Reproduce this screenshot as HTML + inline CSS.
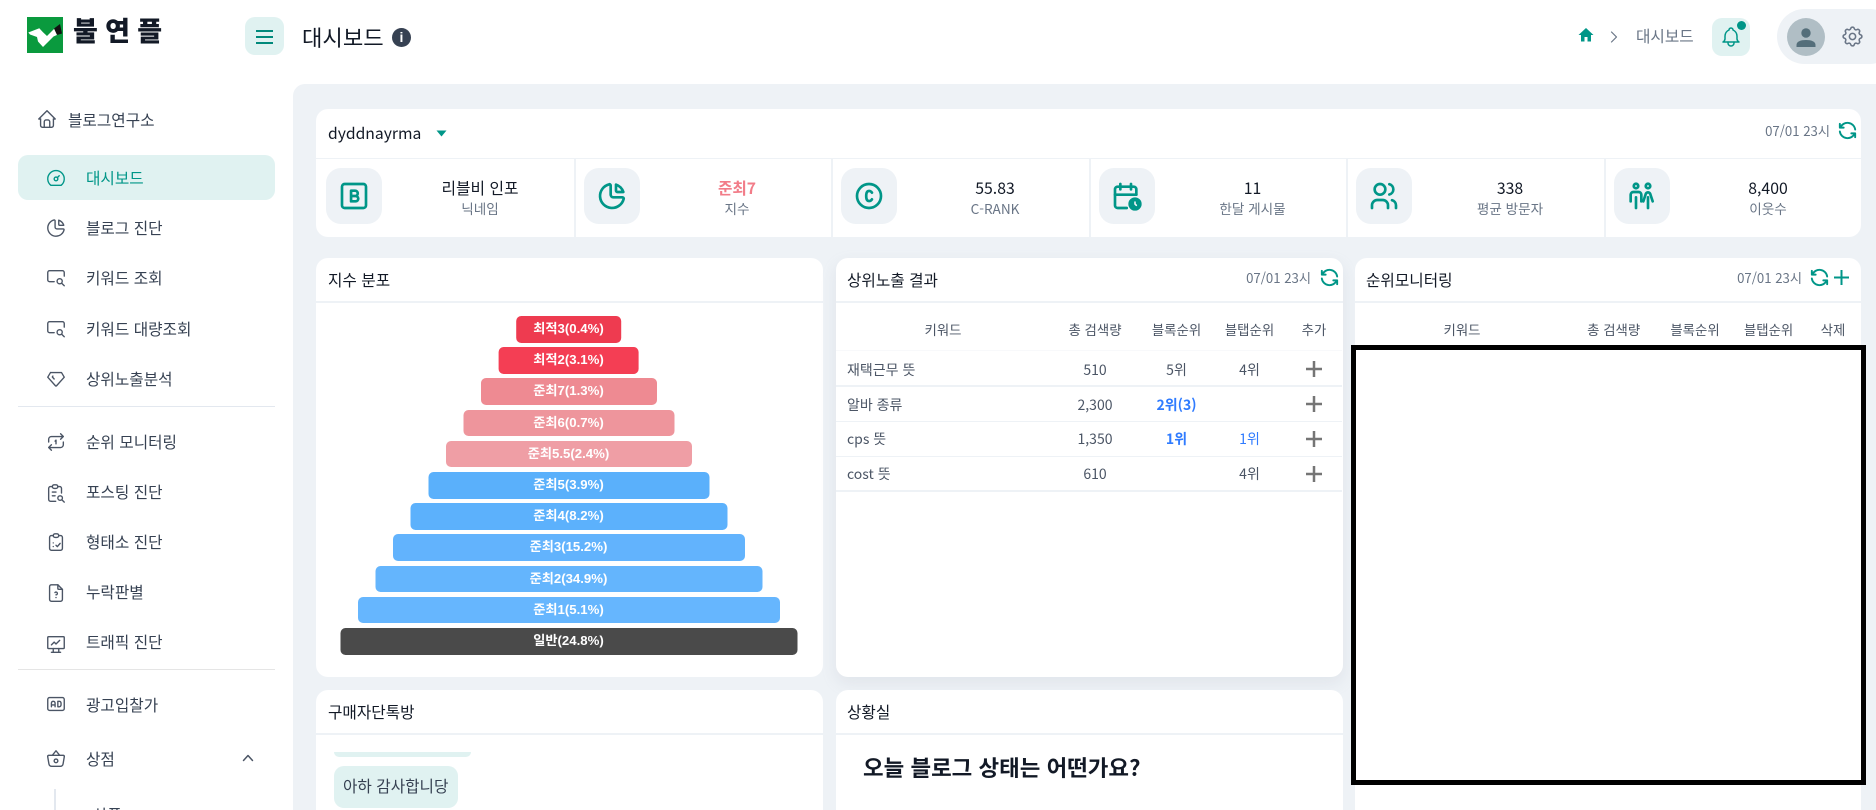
<!DOCTYPE html>
<html lang="ko"><head><meta charset="utf-8"><title>대시보드</title>
<style>
*{box-sizing:border-box}
html,body{margin:0;padding:0;width:1876px;height:810px;overflow:hidden;background:#fff}
body{position:relative;font-family:"Noto Sans CJK KR","Liberation Sans",sans-serif;color:#364152;font-size:15.7px}
.a{position:absolute}
.t{position:absolute;height:30px;line-height:30px;white-space:nowrap}
.c{position:absolute;height:30px;line-height:30px;white-space:nowrap;transform:translateX(-50%)}
svg{position:absolute;overflow:visible}
.i{fill:none;stroke:#4b5565;stroke-width:1.5;stroke-linecap:round;stroke-linejoin:round}
.g{fill:none;stroke:#009688;stroke-width:2;stroke-linecap:round;stroke-linejoin:round}
.card{position:absolute;background:#fff;border-radius:12px}
.line{position:absolute;height:1.5px;background:#eef2f6}
.box{position:absolute;width:56px;height:56px;top:168px;background:#eef2f6;border-radius:15px}
.bar{position:absolute;height:26.6px;border-radius:5px;color:#fff;font:bold 13.2px/26px "Liberation Sans","Noto Sans CJK KR",sans-serif;text-align:center;transform:translateX(-50%);left:568.5px;white-space:nowrap}
.th{color:#4b5565;font-size:13.4px}
.td{color:#4b5565;font-size:14px}
.v{color:#121926;font-size:15.8px}
.s{color:#697586;font-size:13.6px}
.dt{color:#697586;font-size:13.2px}
.h{color:#121926;font-size:15.7px}
.bl{color:#2f7bff}
</style></head><body>

<!-- main bg -->
<div class="a" style="left:293px;top:84px;width:1583px;height:726px;background:#eef2f6;border-top-left-radius:12px"></div>

<!-- logo -->
<svg style="left:27px;top:17px" width="36" height="36" viewBox="0 0 36 36"><rect width="36" height="36" fill="#0a9a3e"/><path d="M1.300 15.500L12.300 11.300L16 15.300L20 19L28 11L31 13L31 17.500L26.500 19.500L20 26L16 30L11 24.500L10 20L3 17.500Z" fill="#fff"/><path d="M27 11.500L33 7L35 16.500L30 18Z" fill="#111"/></svg>
<div class="t" style="left:73px;top:15px;font-size:27px;font-weight:900;color:#121926;letter-spacing:7.300px">불연플</div>

<!-- hamburger -->
<div class="a" style="left:245px;top:17px;width:39px;height:38px;background:#e0f2f1;border-radius:10px"></div>
<div class="a" style="left:256px;top:30px;width:17px;height:1.500px;background:#00897b"></div>
<div class="a" style="left:256px;top:36px;width:17px;height:1.500px;background:#00897b"></div>
<div class="a" style="left:256px;top:42px;width:17px;height:1.500px;background:#00897b"></div>

<!-- title -->
<div class="t" style="left:302px;top:22px;font-size:22.2px;color:#121926">대시보드</div>
<div class="a" style="left:392px;top:28px;width:19px;height:19px;border-radius:50%;background:#364152;color:#fff;font:bold 14px/19px 'Liberation Sans',sans-serif;text-align:center">i</div>

<!-- sidebar -->
<svg class="i" style="left:36px;top:108px" width="22" height="22" viewBox="0 0 24 24"><path d="M5 12H3l9-9 9 9h-2"/><path d="M5 12v7a2 2 0 0 0 2 2h10a2 2 0 0 0 2-2v-7"/><path d="M9 21v-6a2 2 0 0 1 2-2h2a2 2 0 0 1 2 2v6"/></svg>
<div class="t" style="left:68px;top:105px">블로그연구소</div>

<div class="a" style="left:18px;top:155px;width:257px;height:45px;background:#e0f2f1;border-radius:10px"></div>
<svg class="i" style="left:45px;top:167px;stroke:#009688" width="22" height="22" viewBox="0 0 24 24"><path d="M10 13a2 2 0 1 0 4 0a2 2 0 0 0-4 0"/><path d="M13.450 11.550l2.050-2.050"/><path d="M6.400 20a9 9 0 1 1 11.200 0z"/></svg>
<div class="t" style="left:86px;top:163px;color:#009688">대시보드</div>

<svg class="i" style="left:45px;top:217px" width="22" height="22" viewBox="0 0 24 24"><path d="M10 3.200a9 9 0 1 0 10.800 10.800a1 1 0 0 0-1-1h-6.800a2 2 0 0 1-2-2v-7a.9.900 0 0 0-1-.8"/><path d="M15 3.500a9 9 0 0 1 5.500 5.500h-4.500a1 1 0 0 1-1-1v-4.500"/></svg>
<div class="t" style="left:86px;top:213px">블로그 진단</div>

<svg class="i" style="left:45px;top:267px" width="22" height="22" viewBox="0 0 24 24"><path d="M10 16H5a2 2 0 0 1-2-2V6a2 2 0 0 1 2-2h14a2 2 0 0 1 2 2v4"/><circle cx="16" cy="15.500" r="2.800"/><path d="M18.200 17.700L21 20.500"/></svg>
<div class="t" style="left:86px;top:263px">키워드 조회</div>

<svg class="i" style="left:45px;top:318px" width="22" height="22" viewBox="0 0 24 24"><path d="M10 16H5a2 2 0 0 1-2-2V6a2 2 0 0 1 2-2h14a2 2 0 0 1 2 2v4"/><circle cx="16" cy="15.500" r="2.800"/><path d="M18.200 17.700L21 20.500"/></svg>
<div class="t" style="left:86px;top:314px">키워드 대량조회</div>

<svg class="i" style="left:45px;top:368px" width="22" height="22" viewBox="0 0 24 24"><path d="M6 5h12l3 5-8.500 9.500a.7.700 0 0 1-1 0L3 10l3-5"/><path d="M10 12L8 9.800l.6-1"/></svg>
<div class="t" style="left:86px;top:364px">상위노출분석</div>

<div class="a" style="left:18px;top:405.500px;width:257px;height:1.500px;background:#e3e8ef"></div>

<svg class="i" style="left:45px;top:431px" width="22" height="22" viewBox="0 0 24 24"><path d="M4 12V9a3 3 0 0 1 3-3h13m-3-3l3 3-3 3"/><path d="M20 12v3a3 3 0 0 1-3 3H4m3 3l-3-3 3-3"/><path d="M11 11l1-1v4"/></svg>
<div class="t" style="left:86px;top:427px">순위 모니터링</div>

<svg class="i" style="left:45px;top:482px" width="22" height="22" viewBox="0 0 24 24"><path d="M8 5H6a2 2 0 0 0-2 2v12a2 2 0 0 0 2 2h5.700"/><path d="M18 12V7a2 2 0 0 0-2-2h-2"/><rect x="8" y="3" width="6" height="4" rx="2"/><path d="M8 11h4M8 15h3"/><circle cx="16.500" cy="17.500" r="2.500"/><path d="M18.500 19.500L21 22"/></svg>
<div class="t" style="left:86px;top:477px">포스팅 진단</div>

<svg class="i" style="left:45px;top:531px" width="22" height="22" viewBox="0 0 24 24"><path d="M9 5H7a2 2 0 0 0-2 2v12a2 2 0 0 0 2 2h10a2 2 0 0 0 2-2V7a2 2 0 0 0-2-2h-2"/><rect x="9" y="3" width="6" height="4" rx="2"/><path d="M9 13v.01M9 17v.01M12 15.500l1.500 1.500 3-3.500"/></svg>
<div class="t" style="left:86px;top:527px">형태소 진단</div>

<svg class="i" style="left:45px;top:582px" width="22" height="22" viewBox="0 0 24 24"><path d="M14 3v4a1 1 0 0 0 1 1h4"/><path d="M17 21H7a2 2 0 0 1-2-2V5a2 2 0 0 1 2-2h7l5 5v11a2 2 0 0 1-2 2"/><path d="M12 17v.01"/><path d="M12 14a1.500 1.500 0 1 0-1.140-2.470"/></svg>
<div class="t" style="left:86px;top:577px">누락판별</div>

<svg class="i" style="left:45px;top:633px" width="22" height="22" viewBox="0 0 24 24"><rect x="3" y="4" width="18" height="13" rx="1"/><path d="M7 13l3-3 2 2 4-4"/><path d="M9 17v4M15 17v4M7 21h10"/></svg>
<div class="t" style="left:86px;top:627px">트래픽 진단</div>

<div class="a" style="left:18px;top:668.500px;width:257px;height:1.500px;background:#e5e5e5"></div>

<svg class="i" style="left:45px;top:693px" width="22" height="22" viewBox="0 0 24 24"><rect x="3" y="5" width="18" height="14" rx="2"/><path d="M7 15v-4a2 2 0 0 1 4 0v4M7 13h4"/><path d="M14 9v6h1.500a2 2 0 0 0 2-2v-2a2 2 0 0 0-2-2z"/></svg>
<div class="t" style="left:86px;top:690px">광고입찰가</div>

<svg class="i" style="left:45px;top:748px" width="22" height="22" viewBox="0 0 24 24"><circle cx="12" cy="14" r="2"/><path d="M4 8h16a1.500 1.500 0 0 1 1 1.800l-1.300 7.700a3 3 0 0 1-3 2.500H7.300a3 3 0 0 1-3-2.500L3 9.800A1.500 1.500 0 0 1 4 8z"/><path d="M8 8l4-5 4 5"/></svg>
<div class="t" style="left:86px;top:744px">상점</div>
<svg class="i" style="left:242px;top:752px" width="12" height="12" viewBox="0 0 12 12"><path d="M1.500 8.500L6 3.500l4.500 5"/></svg>
<div class="a" style="left:54px;top:789px;width:1.500px;height:21px;background:#e3e8ef"></div>
<div class="t" style="left:93px;top:800px">상품</div>

<!-- top right -->
<svg style="left:1578px;top:27px" width="16" height="16" viewBox="0 0 16 16"><path d="M8 1L0.500 8H3v6.500h3.500V10h3v4.500H13V8h2.500z" fill="#009688"/></svg>
<svg class="i" style="left:1610px;top:30px;stroke:#697586;stroke-width:1.200" width="8" height="14" viewBox="0 0 8 14"><path d="M1.500 2L6.500 7l-5 5"/></svg>
<div class="t" style="left:1636px;top:21px;color:#697586;font-size:15.7px">대시보드</div>
<div class="a" style="left:1712px;top:18px;width:38px;height:38px;background:#e0f2f1;border-radius:10px"></div>
<svg class="g" style="left:1719px;top:25px;stroke-width:1.500" width="24" height="24" viewBox="0 0 24 24"><path d="M10 5a2 2 0 1 1 4 0 7 7 0 0 1 4 6v3a4 4 0 0 0 2 3H4a4 4 0 0 0 2-3v-3a7 7 0 0 1 4-6"/><path d="M9 17v1a3 3 0 0 0 6 0v-1"/></svg>
<div class="a" style="left:1737px;top:21px;width:9px;height:9px;border-radius:50%;background:#009688"></div>
<div class="a" style="left:1777px;top:9px;width:120px;height:55px;background:#eef2f6;border-radius:28px"></div>
<div class="a" style="left:1787px;top:18px;width:38px;height:38px;background:#b0bec5;border-radius:50%"></div>
<svg style="left:1794px;top:25px" width="24" height="24" viewBox="0 0 24 24" fill="#546e7a"><circle cx="12" cy="8" r="4.700"/><path d="M2.500 22v-2c0-3.500 4-5 9.500-5s9.500 1.500 9.500 5v2z"/></svg>
<svg class="i" style="left:1840px;top:24px;stroke:#697586" width="25" height="25" viewBox="0 0 24 24"><path d="M10.325 4.317c.426-1.756 2.924-1.756 3.350 0a1.724 1.724 0 0 0 2.573 1.066c1.543-.94 3.310.826 2.370 2.370a1.724 1.724 0 0 0 1.065 2.572c1.756.426 1.756 2.924 0 3.350a1.724 1.724 0 0 0-1.066 2.573c.94 1.543-.826 3.310-2.370 2.370a1.724 1.724 0 0 0-2.572 1.065c-.426 1.756-2.924 1.756-3.350 0a1.724 1.724 0 0 0-2.573-1.066c-1.543.94-3.310-.826-2.370-2.370a1.724 1.724 0 0 0-1.065-2.572c-1.756-.426-1.756-2.924 0-3.350a1.724 1.724 0 0 0 1.066-2.573c-.94-1.543.826-3.310 2.370-2.370 1 .608 2.296.07 2.572-1.065z"/><circle cx="12" cy="12" r="3"/></svg>

<!-- stat card -->
<div class="card" style="left:316px;top:109px;width:1545px;height:128px"></div>
<div class="t" style="left:328px;top:118px;color:#121926;font-size:15.7px">dyddnayrma</div>
<svg style="left:436px;top:130px" width="11" height="7" viewBox="0 0 11 7"><path d="M0.500 0.500h10L5.500 6.500z" fill="#009688"/></svg>
<div class="t dt" style="right:46px;top:116px">07/01 23시</div>
<svg class="g" style="left:1836px;top:119px" width="23" height="23" viewBox="0 0 24 24"><path d="M20 11a8.100 8.100 0 0 0-15.500-2m-.5-4v4h4"/><path d="M4 13a8.100 8.100 0 0 0 15.500 2m.5 4v-4h-4"/></svg>
<div class="line" style="left:316px;top:157.5px;width:1545px"></div>
<div class="a" style="left:574px;top:159px;width:1.500px;height:78px;background:#eef2f6"></div>
<div class="a" style="left:831px;top:159px;width:1.500px;height:78px;background:#eef2f6"></div>
<div class="a" style="left:1089px;top:159px;width:1.500px;height:78px;background:#eef2f6"></div>
<div class="a" style="left:1346px;top:159px;width:1.500px;height:78px;background:#eef2f6"></div>
<div class="a" style="left:1604px;top:159px;width:1.500px;height:78px;background:#eef2f6"></div>

<div class="box" style="left:326px"></div>
<svg class="g" style="left:338px;top:180px" width="32" height="32" viewBox="0 0 24 24"><rect x="3" y="3" width="18" height="18" rx="2"/><path d="M9.800 8h3a2 2 0 0 1 0 4h-3zM9.800 12h3.400a2 2 0 0 1 0 4H9.800z"/></svg>
<div class="c v" style="left:480px;top:173px">리블비 인포</div>
<div class="c s" style="left:480px;top:193px">닉네임</div>

<div class="box" style="left:584px"></div>
<svg class="g" style="left:596px;top:180px" width="32" height="32" viewBox="0 0 24 24"><path d="M10 3.200a9 9 0 1 0 10.800 10.800a1 1 0 0 0-1-1h-6.800a2 2 0 0 1-2-2v-7a.9.900 0 0 0-1-.8"/><path d="M15 3.500a9 9 0 0 1 5.500 5.500h-4.500a1 1 0 0 1-1-1v-4.500"/></svg>
<div class="c" style="left:737px;top:173px;color:#f27c88;font-weight:700;font-size:15.7px">준최7</div>
<div class="c s" style="left:737px;top:193px">지수</div>

<div class="box" style="left:841px"></div>
<svg class="g" style="left:853px;top:180px" width="32" height="32" viewBox="0 0 24 24"><circle cx="12" cy="12" r="9"/><path d="M14.200 9.500c-.6-.9-1.300-1.300-2.100-1.300-1.300 0-2.200 1.200-2.200 3.800s.9 3.800 2.200 3.800c.8 0 1.500-.4 2.100-1.300"/></svg>
<div class="c v" style="left:995px;top:173px">55.83</div>
<div class="c s" style="left:995px;top:193px">C-RANK</div>

<div class="box" style="left:1099px"></div>
<svg class="g" style="left:1111px;top:180px" width="32" height="32" viewBox="0 0 24 24"><path d="M11.800 21H5a2 2 0 0 1-2-2V7a2 2 0 0 1 2-2h12a2 2 0 0 1 2 2v4"/><path d="M15 3v4M7 3v4M3 11h16"/><circle cx="18" cy="18" r="4" fill="#009688"/><path d="M18 16.500V18l1 1" stroke="#eef2f6" stroke-width="1.200"/></svg>
<div class="c v" style="left:1252.5px;top:173px">11</div>
<div class="c s" style="left:1252.5px;top:193px">한달 게시물</div>

<div class="box" style="left:1356px"></div>
<svg class="g" style="left:1368px;top:180px" width="32" height="32" viewBox="0 0 24 24"><circle cx="9" cy="7" r="4"/><path d="M3 21v-2a4 4 0 0 1 4-4h4a4 4 0 0 1 4 4v2"/><path d="M16 3.130a4 4 0 0 1 0 7.750"/><path d="M21 21v-2a4 4 0 0 0-3-3.850"/></svg>
<div class="c v" style="left:1510px;top:173px">338</div>
<div class="c s" style="left:1510px;top:193px">평균 방문자</div>

<div class="box" style="left:1614px"></div>
<svg class="g" style="left:1626px;top:180px" width="32" height="32" viewBox="0 0 24 24"><circle cx="7.500" cy="4.500" r="1.700"/><circle cx="16.500" cy="4.500" r="1.700"/><path d="M3.500 16v-5a2 2 0 0 1 2-2h4a2 2 0 0 1 2 2v5"/><path d="M7.500 13v8"/><path d="M13 16l1.800-5.500a2 2 0 0 1 1.700-1.300 2 2 0 0 1 1.700 1.300L20 16"/><path d="M16.500 13v8"/></svg>
<div class="c v" style="left:1768px;top:173px">8,400</div>
<div class="c s" style="left:1768px;top:193px">이웃수</div>

<!-- 지수 분포 -->
<div class="card" style="left:316px;top:258px;width:507px;height:419px"></div>
<div class="t h" style="left:328px;top:265px">지수 분포</div>
<div class="line" style="left:316px;top:301px;width:507px"></div>
<div class="bar" style="top:316px;width:105.600px;background:#ee3b50">최적3(0.4%)</div>
<div class="bar" style="top:347.2px;width:140.800px;background:#f43e54">최적2(3.1%)</div>
<div class="bar" style="top:378.4px;width:176px;background:#ee8a92">준최7(1.3%)</div>
<div class="bar" style="top:409.6px;width:211px;background:#ee959c">준최6(0.7%)</div>
<div class="bar" style="top:440.8px;width:246px;background:#ef9ea5">준최5.5(2.4%)</div>
<div class="bar" style="top:472px;width:281px;background:#5ab0fb">준최5(3.9%)</div>
<div class="bar" style="top:503.2px;width:317px;background:#5cb1fc">준최4(8.2%)</div>
<div class="bar" style="top:534.4px;width:352px;background:#62b3fd">준최3(15.2%)</div>
<div class="bar" style="top:565.6px;width:387px;background:#64b5fd">준최2(34.9%)</div>
<div class="bar" style="top:596.8px;width:422px;background:#66b6fe">준최1(5.1%)</div>
<div class="bar" style="top:628px;width:457px;background:#4a4a4a">일반(24.8%)</div>

<!-- 구매자단톡방 -->
<div class="card" style="left:316px;top:690px;width:507px;height:140px"></div>
<div class="t h" style="left:328px;top:697px">구매자단톡방</div>
<div class="line" style="left:316px;top:733px;width:507px"></div>
<div class="a" style="left:334px;top:752px;width:137px;height:5px;background:#e0f2f1;border-radius:0 0 10px 10px"></div>
<div class="a" style="left:334px;top:766px;width:124px;height:42px;background:#e0f2f1;border-radius:10px"></div>
<div class="t" style="left:343px;top:771px">아하 감사합니당</div>

<!-- 상위노출 결과 -->
<div class="card" style="left:836px;top:258px;width:507px;height:419px;box-shadow:0 6px 16px rgba(140,150,170,.14)"></div>
<div class="t h" style="left:847px;top:265px">상위노출 결과</div>
<div class="t dt" style="right:565px;top:263px">07/01 23시</div>
<svg class="g" style="left:1318px;top:266px" width="23" height="23" viewBox="0 0 24 24"><path d="M20 11a8.100 8.100 0 0 0-15.500-2m-.5-4v4h4"/><path d="M4 13a8.100 8.100 0 0 0 15.500 2m.5 4v-4h-4"/></svg>
<div class="line" style="left:836px;top:301px;width:507px"></div>
<div class="c th" style="left:943px;top:314px">키워드</div>
<div class="c th" style="left:1095px;top:314px">총 검색량</div>
<div class="c th" style="left:1176.500px;top:314px">블록순위</div>
<div class="c th" style="left:1249.500px;top:314px">블탭순위</div>
<div class="c th" style="left:1314px;top:314px">추가</div>
<div class="a" style="left:836px;top:350px;width:506px;height:1px;background:#f8f9fb"></div>

<div class="t td" style="left:847px;top:355px">재택근무 뜻</div>
<div class="c td" style="left:1095px;top:355px">510</div>
<div class="c td" style="left:1176.500px;top:355px">5위</div>
<div class="c td" style="left:1249.500px;top:355px">4위</div>
<div class="line" style="left:836px;top:385px;width:506px"></div>

<div class="t td" style="left:847px;top:390px">알바 종류</div>
<div class="c td" style="left:1095px;top:390px">2,300</div>
<div class="c td bl" style="left:1176.500px;top:390px;font-weight:700">2위(3)</div>
<div class="line" style="left:836px;top:420.500px;width:506px"></div>

<div class="t td" style="left:847px;top:424px">cps 뜻</div>
<div class="c td" style="left:1095px;top:424px">1,350</div>
<div class="c td bl" style="left:1176.500px;top:424px;font-weight:700">1위</div>
<div class="c td bl" style="left:1249.500px;top:424px">1위</div>
<div class="line" style="left:836px;top:455.500px;width:506px"></div>

<div class="t td" style="left:847px;top:459px">cost 뜻</div>
<div class="c td" style="left:1095px;top:459px">610</div>
<div class="c td" style="left:1249.500px;top:459px">4위</div>
<div class="line" style="left:836px;top:490px;width:506px"></div>

<svg style="left:1306px;top:361px" width="16" height="16" viewBox="0 0 16 16"><path d="M8 0v16M0 8h16" stroke="#757575" stroke-width="2.500"/></svg>
<svg style="left:1306px;top:396px" width="16" height="16" viewBox="0 0 16 16"><path d="M8 0v16M0 8h16" stroke="#757575" stroke-width="2.500"/></svg>
<svg style="left:1306px;top:431px" width="16" height="16" viewBox="0 0 16 16"><path d="M8 0v16M0 8h16" stroke="#757575" stroke-width="2.500"/></svg>
<svg style="left:1306px;top:466px" width="16" height="16" viewBox="0 0 16 16"><path d="M8 0v16M0 8h16" stroke="#757575" stroke-width="2.500"/></svg>

<!-- 상황실 -->
<div class="card" style="left:836px;top:690px;width:507px;height:140px"></div>
<div class="t h" style="left:847px;top:697px">상황실</div>
<div class="line" style="left:836px;top:733px;width:507px"></div>
<div class="t" style="left:863px;top:752px;font-size:22.4px;font-weight:700;color:#121926">오늘 블로그 상태는 어떤가요?</div>

<!-- 순위모니터링 -->
<div class="card" style="left:1355px;top:258px;width:506px;height:570px"></div>
<div class="t h" style="left:1366px;top:265px">순위모니터링</div>
<div class="t dt" style="right:74px;top:263px">07/01 23시</div>
<svg class="g" style="left:1808px;top:266px" width="23" height="23" viewBox="0 0 24 24"><path d="M20 11a8.100 8.100 0 0 0-15.500-2m-.5-4v4h4"/><path d="M4 13a8.100 8.100 0 0 0 15.500 2m.5 4v-4h-4"/></svg>
<svg style="left:1834px;top:270px" width="15" height="15" viewBox="0 0 15 15"><path d="M7.500 0v15M0 7.500h15" stroke="#009688" stroke-width="2"/></svg>
<div class="line" style="left:1355px;top:301px;width:506px"></div>
<div class="c th" style="left:1462px;top:314px">키워드</div>
<div class="c th" style="left:1613.700px;top:314px">총 검색량</div>
<div class="c th" style="left:1695px;top:314px">블록순위</div>
<div class="c th" style="left:1768.600px;top:314px">블탭순위</div>
<div class="c th" style="left:1833px;top:314px">삭제</div>
<div class="a" style="left:1351px;top:345px;width:515px;height:440px;background:#fff;border:5px solid #000"></div>

</body></html>
